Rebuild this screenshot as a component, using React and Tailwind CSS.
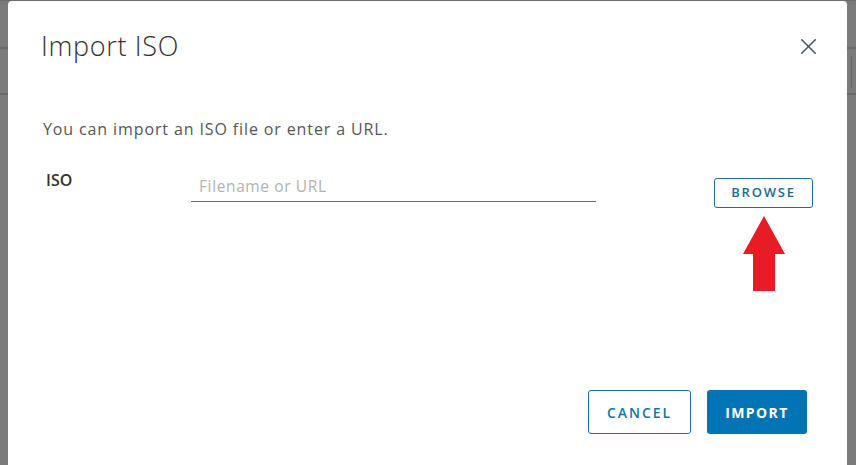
import { X } from "lucide-react";

const font = { fontFamily: "'Open Sans', Lato, sans-serif" };

const Backdrop = ({ children }) => (
  <div className="relative h-[465px] w-[856px] overflow-hidden bg-[#7b7b7b]">
    <div className="absolute left-0 right-0 top-0 h-px bg-[#6e6e6e]" />
    <div className="absolute left-0 right-0 top-[47px] h-[2px] bg-[#6a6a6a]" />
    <div className="absolute left-0 right-0 top-[93px] h-[2px] bg-[#6a6a6a]" />
    <div className="absolute right-[4px] top-[56px] h-[32px] w-px bg-[#666]" />
    {children}
  </div>
);

const Arrow = () => (
  <svg width="42" height="76" viewBox="0 0 42 76" className="mt-[8px]">
    <polygon points="21,0 42,38 32,38 32,75 10,75 10,38 0,38" fill="#e81c24" />
  </svg>
);

export default function App() {
  return (
    <Backdrop>
      <div
        className="absolute left-[8px] top-[1px] flex h-[470px] w-[839px] flex-col rounded-t-[4px] bg-white"
        style={font}
      >
        <div className="flex items-start justify-between pl-[33px] pr-[25px] pt-[27px]">
          <h1 className="text-[27px] font-light leading-[35px] tracking-[0.025em] text-[#313131]">Import ISO</h1>
          <X className="mt-[5px] h-[27px] w-[27px] text-[#4d5860]" strokeWidth={1.4} />
        </div>

        <p className="mt-[55px] pl-[35px] text-[16px] leading-[22px] tracking-[0.055em] text-[#565656]">
          You can import an ISO file or enter a URL.
        </p>

        <div className="mt-[28px] flex items-start pl-[38px]">
          <span className="w-[145px] pt-[3px] text-[16px] font-semibold leading-[18px] text-[#333]">ISO</span>
          <div className="mt-[8px] w-[405px] border-b border-[#6b6b6b] pb-[5px] pl-[8px] text-[15.5px] leading-[20px] tracking-[0.04em] text-[#b3b3b3]">
            Filename or URL
          </div>
          <div className="ml-auto mr-[34px] mt-[10px] flex flex-col items-center">
            <button className="h-[30px] w-[99px] rounded-[3px] border border-[#1a6f8f] text-[13px] font-semibold tracking-[0.14em] text-[#1d6b8a]">
              BROWSE
            </button>
            <Arrow />
          </div>
        </div>

        <div className="mt-[98px] flex justify-end gap-[16px] pr-[40px]">
          <button className="h-[44px] w-[103px] rounded-[3px] border border-[#1774a3] text-[14px] font-semibold tracking-[0.14em] text-[#1774a3]">
            CANCEL
          </button>
          <button className="h-[44px] w-[100px] rounded-[3px] bg-[#0074b4] text-[14px] font-bold tracking-[0.1em] text-white">
            IMPORT
          </button>
        </div>
      </div>
    </Backdrop>
  );
}
